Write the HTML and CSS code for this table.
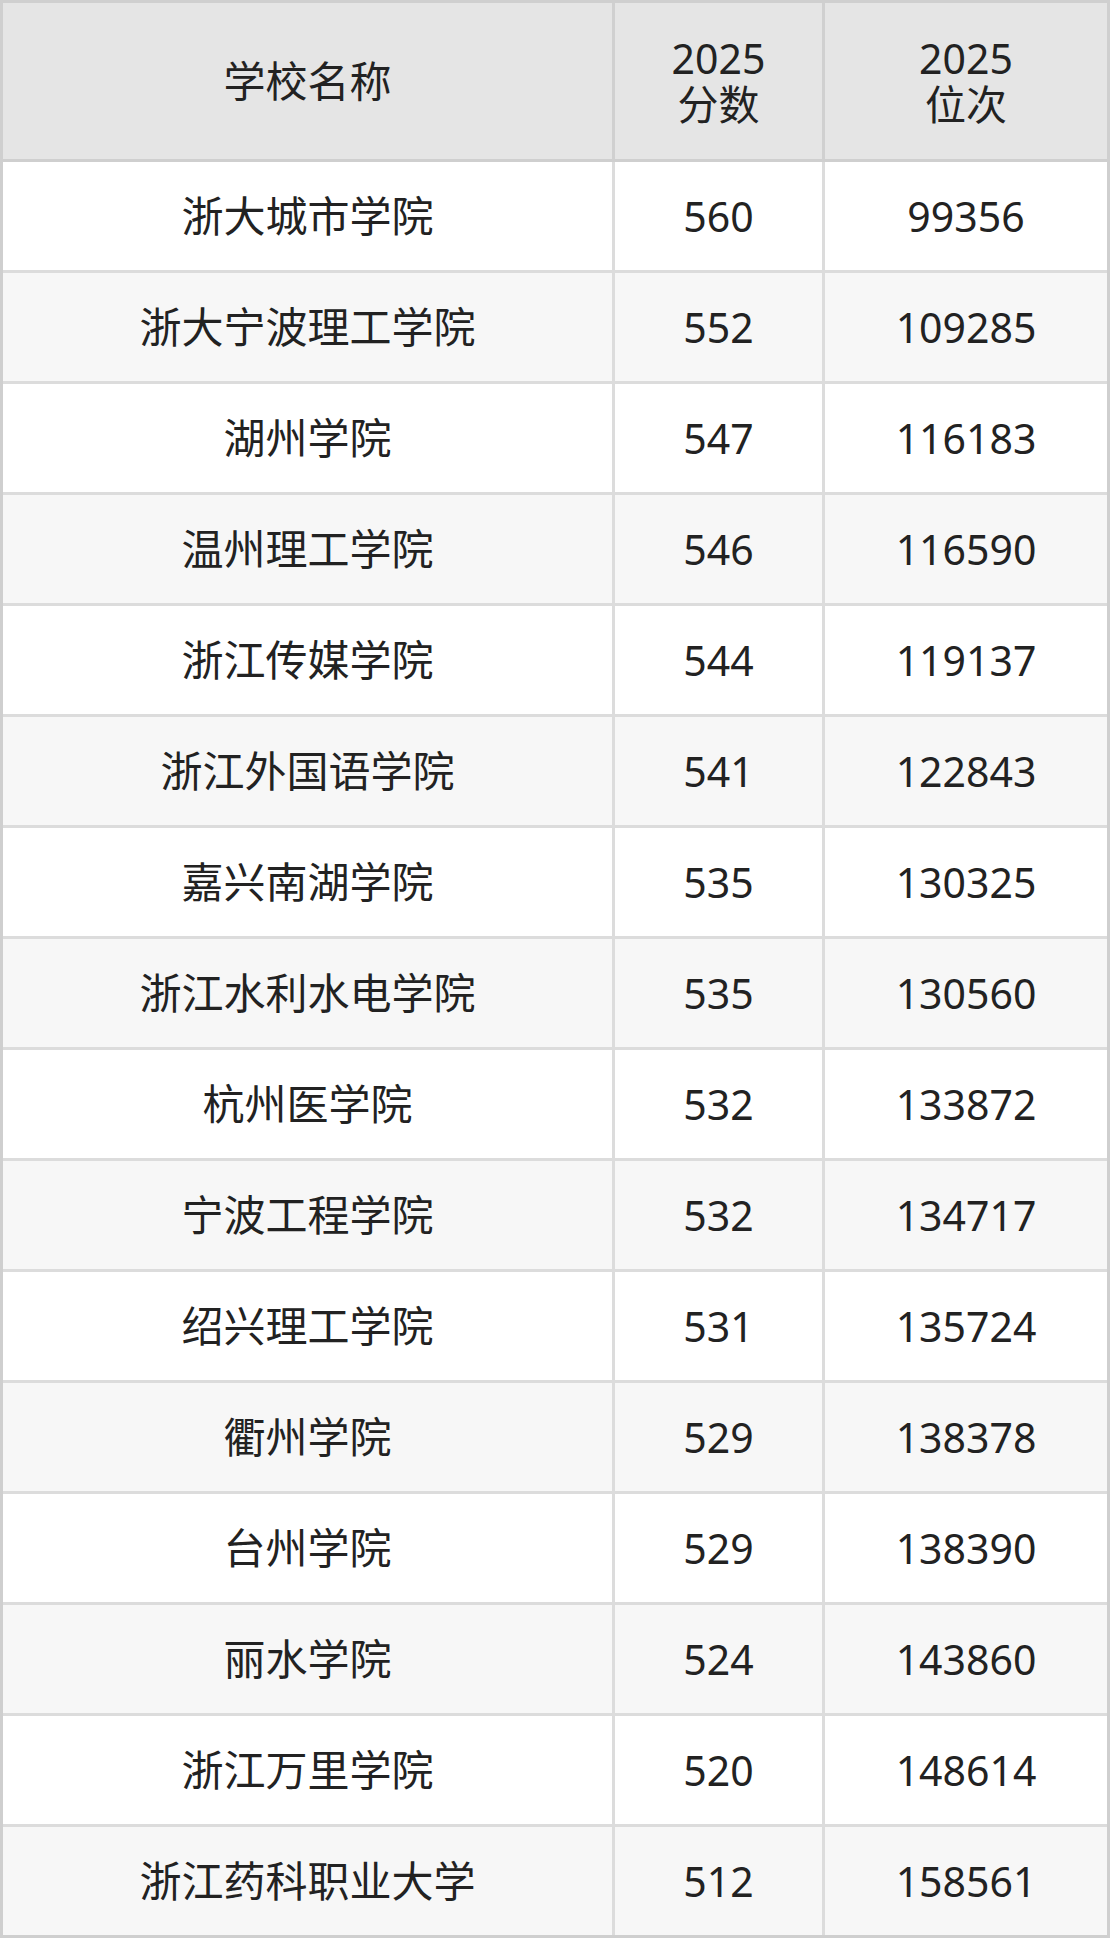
FILE: index.html
```html
<!DOCTYPE html>
<html lang="zh">
<head>
<meta charset="utf-8">
<link rel="stylesheet" href="styles.css">
</head>
<body>
<table class="score-table">
  <colgroup>
    <col class="col-name">
    <col class="col-score">
    <col class="col-rank">
  </colgroup>
  <thead>
    <tr>
      <th class="name">学校名称</th>
      <th>2025<br>分数</th>
      <th>2025<br>位次</th>
    </tr>
  </thead>
  <tbody>
    <tr><td class="name">浙大城市学院</td><td>560</td><td>99356</td></tr>
    <tr><td class="name">浙大宁波理工学院</td><td>552</td><td>109285</td></tr>
    <tr><td class="name">湖州学院</td><td>547</td><td>116183</td></tr>
    <tr><td class="name">温州理工学院</td><td>546</td><td>116590</td></tr>
    <tr><td class="name">浙江传媒学院</td><td>544</td><td>119137</td></tr>
    <tr><td class="name">浙江外国语学院</td><td>541</td><td>122843</td></tr>
    <tr><td class="name">嘉兴南湖学院</td><td>535</td><td>130325</td></tr>
    <tr><td class="name">浙江水利水电学院</td><td>535</td><td>130560</td></tr>
    <tr><td class="name">杭州医学院</td><td>532</td><td>133872</td></tr>
    <tr><td class="name">宁波工程学院</td><td>532</td><td>134717</td></tr>
    <tr><td class="name">绍兴理工学院</td><td>531</td><td>135724</td></tr>
    <tr><td class="name">衢州学院</td><td>529</td><td>138378</td></tr>
    <tr><td class="name">台州学院</td><td>529</td><td>138390</td></tr>
    <tr><td class="name">丽水学院</td><td>524</td><td>143860</td></tr>
    <tr><td class="name">浙江万里学院</td><td>520</td><td>148614</td></tr>
    <tr><td class="name">浙江药科职业大学</td><td>512</td><td>158561</td></tr>
  </tbody>
</table>
</body>
</html>
```
FILE: styles.css
```css
html, body {
  margin: 0;
  padding: 0;
  background: #ffffff;
}

.score-table {
  width: 1110px;
  table-layout: fixed;
  border-collapse: separate;
  border-spacing: 0;
  border: 3px solid #cfcfcf;
  font-family: "Noto Sans", "Noto Sans CJK SC", sans-serif;
  font-size: 41px;
  color: #222222;
}

.col-name { width: 609px; }
.col-score { width: 210px; }
.col-rank { width: 285px; }

.score-table th,
.score-table td {
  padding: 0;
  text-align: center;
  vertical-align: middle;
  font-weight: normal;
}

.score-table .name {
  font-size: 42px;
}

.score-table th + th,
.score-table td + td {
  border-left: 3px solid #dcdcdc;
}

.score-table thead th {
  height: 156px;
  line-height: 46px;
  background: #e5e5e5;
  border-bottom: 3px solid #cfcfcf;
}

.score-table thead th + th {
  border-left-color: #d0d0d0;
}

.score-table tbody td {
  height: 108px;
  line-height: 50px;
}

.score-table tbody tr + tr td {
  border-top: 3px solid #dcdcdc;
}

.score-table tbody tr:nth-child(even) td {
  background: #f7f7f7;
}
```
